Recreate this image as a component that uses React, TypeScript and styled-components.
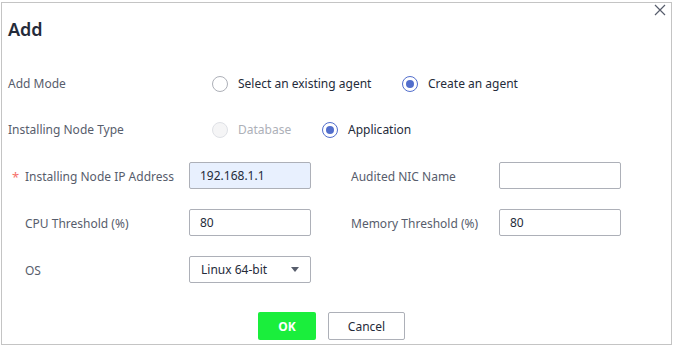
import { FunctionComponent } from "react";
import styled, { createGlobalStyle } from "styled-components";

const GlobalStyle = createGlobalStyle`
  html, body {
    margin: 0;
    padding: 0;
    background: #ffffff;
  }
  body {
    font-family: "Noto Sans", "Open Sans", sans-serif;
  }
`;

const DialogRoot = styled.div`
  position: relative;
  box-sizing: border-box;
  margin: 2px 0 0 1px;
  width: 671px;
  height: 343px;
  border: 1px solid #c4c4c4;
  background: #ffffff;
  padding: 10px 0 0 6px;
  color: #252b3a;
  font-size: 12px;
`;

const CloseButton = styled.button`
  position: absolute;
  top: 0px;
  right: 4px;
  width: 14px;
  height: 14px;
  padding: 0;
  border: none;
  background: transparent;
  display: flex;
  align-items: center;
  justify-content: center;
  cursor: pointer;
`;

const Title = styled.div`
  font-size: 18px;
  font-weight: 600;
  line-height: 32px;
  color: #252b3a;
`;

const Body = styled.div`
  margin-top: 16px;
  display: flex;
  flex-direction: column;
`;

const RadioRow = styled.div`
  height: 46px;
  display: flex;
  align-items: center;
`;

const RowLabel = styled.div<{ $width: number }>`
  width: ${(p) => p.$width}px;
  flex-shrink: 0;
  color: #575d6c;
  line-height: 18px;
`;

const RadioGroup = styled.div`
  display: flex;
  align-items: center;
`;

const RadioOption = styled.label<{ $width: number; $disabled?: boolean }>`
  width: ${(p) => p.$width}px;
  display: flex;
  align-items: center;
  gap: 10px;
  color: ${(p) => (p.$disabled ? "#adb0b8" : "#252b3a")};
  line-height: 18px;
`;

const RadioCircle = styled.span<{ $checked?: boolean; $disabled?: boolean }>`
  box-sizing: border-box;
  width: 16px;
  height: 16px;
  border-radius: 50%;
  border: 1px solid
    ${(p) => (p.$checked ? "#526ecc" : p.$disabled ? "#dfe1e6" : "#adb0b8")};
  background: ${(p) => (p.$disabled ? "#f5f5f6" : "#ffffff")};
  display: flex;
  align-items: center;
  justify-content: center;
  flex-shrink: 0;
  &::after {
    content: "";
    display: ${(p) => (p.$checked ? "block" : "none")};
    width: 8px;
    height: 8px;
    border-radius: 50%;
    background: #526ecc;
  }
`;

const FieldGrid = styled.div`
  margin-top: 9px;
  padding-left: 17px;
  display: grid;
  grid-template-columns: 164px 122px 40px 148px 122px;
  grid-auto-rows: 27px;
  row-gap: 20px;
  align-items: center;
`;

const FieldLabel = styled.div<{ $col?: number }>`
  grid-column: ${(p) => p.$col ?? 1};
  color: #575d6c;
  line-height: 18px;
  position: relative;
  padding-top: 2px;
`;

const Required = styled.span`
  position: absolute;
  left: -13px;
  top: 2px;
  color: #f66f6a;
  font-size: 13px;
`;

const TextInput = styled.div<{ $filled?: boolean }>`
  box-sizing: border-box;
  height: 27px;
  border: 1px solid #adb0b8;
  border-radius: 2px;
  background: ${(p) => (p.$filled ? "#e8f0fe" : "#ffffff")};
  padding: 0 10px;
  display: flex;
  align-items: center;
  color: #252b3a;
`;

const Select = styled(TextInput)`
  justify-content: space-between;
  padding: 0 10px 0 11px;
`;

const Caret = styled.span`
  width: 0;
  height: 0;
  border-left: 4px solid transparent;
  border-right: 4px solid transparent;
  border-top: 5px solid #575d6c;
  margin-right: 1px;
`;

const Footer = styled.div`
  margin-top: 29px;
  display: flex;
  justify-content: center;
  gap: 12px;
  padding-right: 16px;
`;

const OkButton = styled.button`
  box-sizing: border-box;
  width: 58px;
  height: 28px;
  border: none;
  border-radius: 2px;
  background: #1aee3c;
  color: #ffffff;
  font-family: inherit;
  font-size: 12px;
  font-weight: 700;
`;

const CancelButton = styled.button`
  box-sizing: border-box;
  width: 77px;
  height: 28px;
  border: 1px solid #adb0b8;
  border-radius: 2px;
  background: #ffffff;
  color: #252b3a;
  font-family: inherit;
  font-size: 12px;
`;

const App: FunctionComponent = () => {
  return (
    <>
      <GlobalStyle />
      <DialogRoot>
        <CloseButton aria-label="Close">
          <svg width="12" height="12" viewBox="0 0 12 12">
            <path d="M1 1L11 11M11 1L1 11" stroke="#575d6c" strokeWidth="1.2" />
          </svg>
        </CloseButton>
        <Title>Add</Title>
        <Body>
          <RadioRow>
            <RowLabel $width={204}>Add Mode</RowLabel>
            <RadioGroup>
              <RadioOption $width={190}>
                <RadioCircle />
                Select an existing agent
              </RadioOption>
              <RadioOption $width={140}>
                <RadioCircle $checked />
                Create an agent
              </RadioOption>
            </RadioGroup>
          </RadioRow>
          <RadioRow>
            <RowLabel $width={204}>Installing Node Type</RowLabel>
            <RadioGroup>
              <RadioOption $width={110} $disabled>
                <RadioCircle $disabled />
                Database
              </RadioOption>
              <RadioOption $width={120}>
                <RadioCircle $checked />
                Application
              </RadioOption>
            </RadioGroup>
          </RadioRow>
          <FieldGrid>
            <FieldLabel>
              <Required>*</Required>
              Installing Node IP Address
            </FieldLabel>
            <TextInput $filled>192.168.1.1</TextInput>
            <FieldLabel $col={4}>Audited NIC Name</FieldLabel>
            <TextInput />
            <FieldLabel>CPU Threshold (%)</FieldLabel>
            <TextInput>80</TextInput>
            <FieldLabel $col={4}>Memory Threshold (%)</FieldLabel>
            <TextInput>80</TextInput>
            <FieldLabel>OS</FieldLabel>
            <Select>
              Linux 64-bit
              <Caret />
            </Select>
          </FieldGrid>
          <Footer>
            <OkButton>OK</OkButton>
            <CancelButton>Cancel</CancelButton>
          </Footer>
        </Body>
      </DialogRoot>
    </>
  );
};

export default App;
